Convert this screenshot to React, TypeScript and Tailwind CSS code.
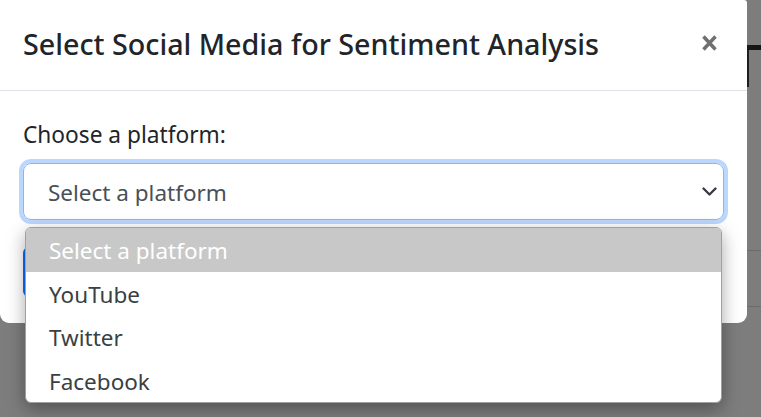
import React from 'react';

const font = { fontFamily: '"Noto Sans", "Open Sans", sans-serif' };

const options = ['Select a platform', 'YouTube', 'Twitter', 'Facebook'];

const CloseIcon = () => (
  <svg width="15" height="16" viewBox="0 0 15 16" className="text-[#707070]">
    <path d="M1.5 1.5 13.5 14.5M13.5 1.5 1.5 14.5" stroke="currentColor" strokeWidth="3.5" strokeLinecap="butt" />
  </svg>
);

const Chevron = () => (
  <svg width="15" height="9" viewBox="0 0 15 9" className="text-[#343a40]">
    <polyline points="1.5,1.5 7.5,7.5 13.5,1.5" fill="none" stroke="currentColor" strokeWidth="2.3" strokeLinecap="round" strokeLinejoin="round" />
  </svg>
);

export default function App() {
  return (
    <div className="relative w-[761px] h-[417px] overflow-hidden bg-[#7d7d7d] flex" style={font}>
      {/* modal */}
      <div className="w-[747px] h-[323px] bg-white rounded-b-[9px] rounded-tr-[3px] flex flex-col shrink-0">
        <div className="h-[91px] border-b border-[#dee2e6] px-[23px] flex items-center justify-between">
          <h5 className="text-[28.7px] font-medium text-[#212529] leading-none mt-[-2px]">
            Select Social Media for Sentiment Analysis
          </h5>
          <button className="mr-[7px] mt-[-4px]">
            <CloseIcon />
          </button>
        </div>
        <div className="px-[23px] pt-[30px]">
          <label className="block text-[22.7px] text-[#212529] leading-[28px]">Choose a platform:</label>
          <div className="mt-[14px] h-[57px] rounded-[8px] border border-[#86b7fe] shadow-[0_0_0_4px_rgba(13,110,253,0.28)] flex items-center justify-between pl-[24px] pr-[6px]">
            <span className="text-[22.5px] text-[#495057] mt-[3px]">Select a platform</span>
            <span><Chevron /></span>
          </div>
          <button className="mt-[27px] h-[50px] w-[160px] rounded-[6px] bg-[#0d6efd]" />
        </div>
      </div>

      {/* background page behind the overlay */}
      <div className="flex-1 flex flex-col">
        <div className="h-[45px]" />
        <div className="h-[5px] bg-[#161616]" />
        <div className="h-[37px] border-l-2 border-[#1e1e1e]" />
        <div className="h-[163px]" />
        <div className="h-px bg-[#6c6c6c]" />
        <div className="h-[55px]" />
        <div className="h-px bg-[#6c6c6c]" />
      </div>

      {/* native select popup */}
      <div className="absolute left-[25px] top-[227px] w-[697px] bg-white rounded-[6px] border border-[#a0a0a0] shadow-[0_6px_18px_rgba(0,0,0,0.35)] overflow-hidden">
        {options.map((o, i) => (
          <div
            key={o}
            className={
              i === 0
                ? 'h-[43.5px] flex items-center pl-[23px] pt-[3px] text-[22.5px] bg-[#c8c8c8] text-white'
                : 'h-[43.5px] flex items-center pl-[23px] pt-[3px] text-[22.5px] text-[#3a3f44]'
            }
          >
            {o}
          </div>
        ))}
      </div>
    </div>
  );
}
